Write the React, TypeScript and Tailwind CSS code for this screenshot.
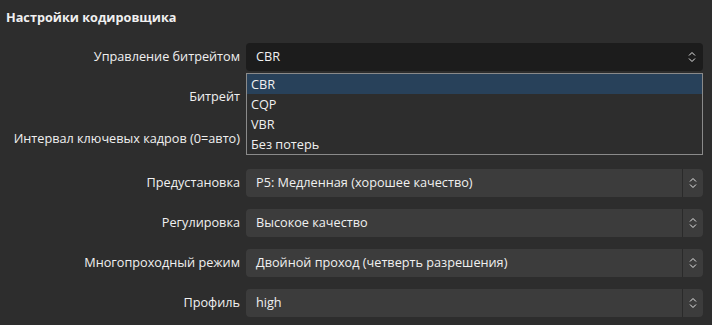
import React from "react";

function Arrows() {
  return (
    <svg width="8" height="12" viewBox="0 0 8 12" fill="none">
      <path d="M1 4.5 L4 1.5 L7 4.5" stroke="#e6e6e6" strokeWidth="1" />
      <path d="M1 7.5 L4 10.5 L7 7.5" stroke="#e6e6e6" strokeWidth="1" />
    </svg>
  );
}

function Combo({ text, dark }: { text: string; dark?: boolean }) {
  if (dark) {
    return (
      <div className="flex h-[28px] w-[457px] items-center rounded-[4px] bg-[#1c1c1c]">
        <span className="flex-1 pl-[10px]">{text}</span>
        <div className="flex w-[20px] items-center justify-center pr-[2px]">
          <Arrows />
        </div>
      </div>
    );
  }
  return (
    <div className="flex h-[28px] w-[457px] items-center rounded-[4px] bg-[#3c3c3c]">
      <span className="flex-1 pl-[10px]">{text}</span>
      <div className="flex h-full w-[21px] items-center justify-center border-l border-[#2a2a2a]">
        <Arrows />
      </div>
    </div>
  );
}

function Row({
  label,
  children,
  mt,
}: {
  label: string;
  children: React.ReactNode;
  mt: string;
}) {
  return (
    <div className={`flex items-center ${mt}`}>
      <div className="w-[240px] shrink-0 text-right">{label}</div>
      <div className="ml-[6px]">{children}</div>
    </div>
  );
}

export default function App() {
  return (
    <div className="relative h-[325px] w-[712px] overflow-hidden bg-[#2d2d2d] font-['Open_Sans',_'Noto_Sans',_sans-serif] text-[12.7px] text-[#f0f0f0]">
      <div className="pl-[6px] pt-[7px] text-[12.7px] font-bold leading-[20px]">
        Настройки кодировщика
      </div>
      <div className="flex flex-col">
        <Row label="Управление битрейтом" mt="mt-[16px]">
          <Combo text="CBR" dark />
        </Row>
        <Row label="Битрейт" mt="mt-[12px]">
          <div className="h-[28px] w-[457px] rounded-[4px] bg-[#3c3c3c]" />
        </Row>
        <Row label="Интервал ключевых кадров (0=авто)" mt="mt-[14px]">
          <div className="h-[28px] w-[457px] rounded-[4px] bg-[#3c3c3c]" />
        </Row>
        <Row label="Предустановка" mt="mt-[16px]">
          <Combo text="P5: Медленная (хорошее качество)" />
        </Row>
        <Row label="Регулировка" mt="mt-[12px]">
          <Combo text="Высокое качество" />
        </Row>
        <Row label="Многопроходный режим" mt="mt-[12px]">
          <Combo text="Двойной проход (четверть разрешения)" />
        </Row>
        <Row label="Профиль" mt="mt-[12px]">
          <Combo text="high" />
        </Row>
      </div>

      <div className="absolute left-[246px] top-[73px] flex w-[457px] flex-col border border-[#8a8a8a] bg-[#2d2d2d]">
        <div className="h-[20px] bg-[#28415a] pl-[4px] leading-[20px]">CBR</div>
        <div className="h-[20px] pl-[4px] leading-[20px]">CQP</div>
        <div className="h-[20px] pl-[4px] leading-[20px]">VBR</div>
        <div className="h-[20px] pl-[4px] leading-[20px]">Без потерь</div>
      </div>
    </div>
  );
}
